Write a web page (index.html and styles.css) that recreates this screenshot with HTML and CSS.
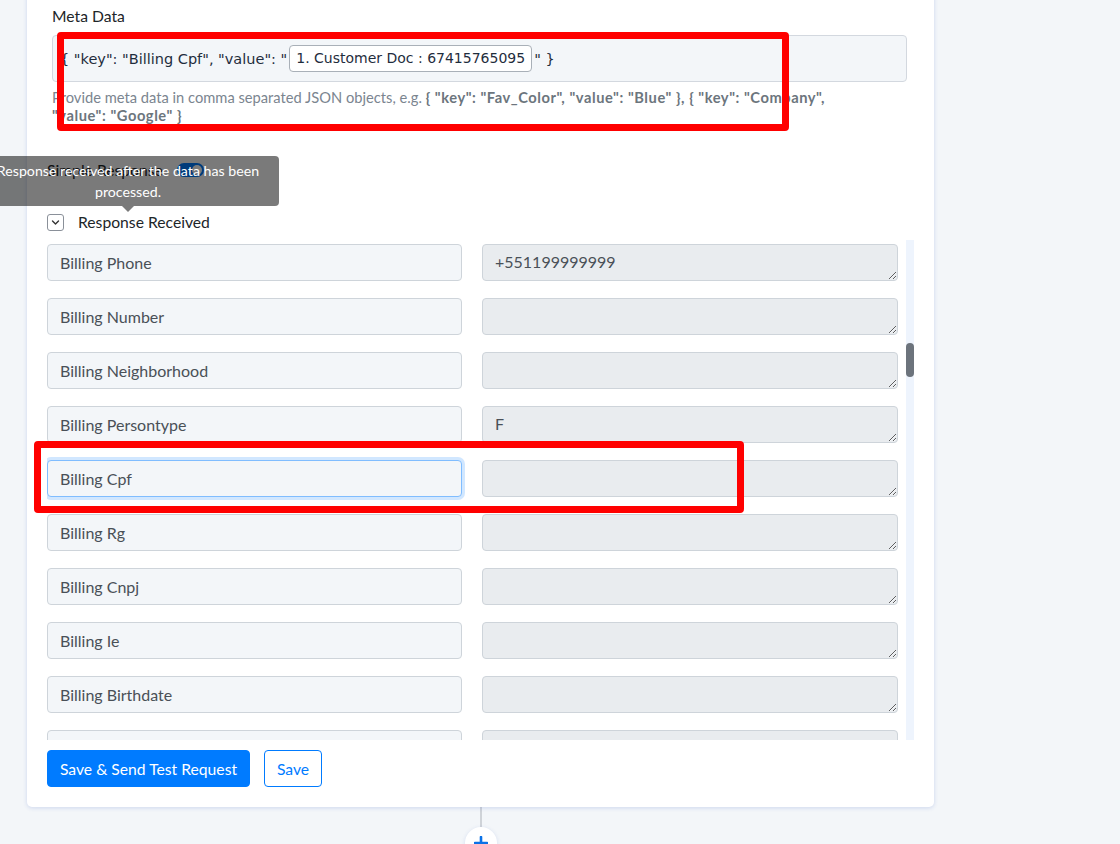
FILE: index.html
```html
<!DOCTYPE html>
<html lang="en">
<head>
<meta charset="utf-8">
<title>Webhook Step</title>
<link rel="stylesheet" href="styles.css">
</head>
<body>
<div class="page">
  <div class="card">
    <section class="meta">
      <div class="meta-label">Meta Data</div>
      <div class="meta-box">
        <span class="meta-text">{ "key": "Billing Cpf", "value": "</span><span class="token">1. Customer Doc : 67415765095</span><span class="meta-text">" }</span>
      </div>
      <p class="help">Provide meta data in comma separated JSON objects, e.g. <b>{ "key": "Fav_Color", "value": "Blue" }, { "key": "Company", "value": "Google" }</b></p>
      <div class="mark mark-meta"></div>
    </section>

    <div class="simple">
      <span class="simple-label">Simple Response</span>
      <span class="toggle"><span class="knob"></span></span>
      <div class="tooltip">Response received after the data has been<br>processed.</div>
    </div>

    <div class="received">
      <span class="chev">
        <svg width="11" height="11" viewBox="0 0 11 11"><path d="M2.5 4l3 3 3-3" fill="none" stroke="#333" stroke-width="1.4" stroke-linecap="round" stroke-linejoin="round"/></svg>
      </span>
      <span>Response Received</span>
    </div>

    <div class="scroller">
      <div class="rows">
        <div class="row"><input class="key" value="Billing Phone" readonly><textarea class="val" readonly>+551199999999</textarea></div>
        <div class="row"><input class="key" value="Billing Number" readonly><textarea class="val" readonly></textarea></div>
        <div class="row"><input class="key" value="Billing Neighborhood" readonly><textarea class="val" readonly></textarea></div>
        <div class="row"><input class="key" value="Billing Persontype" readonly><textarea class="val" readonly>F</textarea></div>
        <div class="row"><input class="key focus" value="Billing Cpf" readonly><textarea class="val" readonly></textarea></div>
        <div class="row"><input class="key" value="Billing Rg" readonly><textarea class="val" readonly></textarea></div>
        <div class="row"><input class="key" value="Billing Cnpj" readonly><textarea class="val" readonly></textarea></div>
        <div class="row"><input class="key" value="Billing Ie" readonly><textarea class="val" readonly></textarea></div>
        <div class="row"><input class="key" value="Billing Birthdate" readonly><textarea class="val" readonly></textarea></div>
        <div class="row"><input class="key" value="Billing Gender" readonly><textarea class="val" readonly></textarea></div>
      </div>
      <div class="track"><div class="thumb"></div></div>
    </div>

    <div class="actions">
      <button class="btn btn-primary">Save &amp; Send Test Request</button>
      <button class="btn btn-outline">Save</button>
    </div>

    <div class="mark mark-row"></div>
  </div>

  <div class="connector">
    <span class="line"></span>
    <span class="add">
      <svg width="14" height="14" viewBox="0 0 14 14"><path d="M7 1v12M1 7h12" stroke="#0b72e7" stroke-width="2.6" stroke-linecap="round"/></svg>
    </span>
  </div>
</div>
</body>
</html>
```

FILE: styles.css
```css
html, body {
  margin: 0;
  padding: 0;
}

body {
  background: #f3f6f9;
  font-family: Lato, "Open Sans", sans-serif;
  color: #212529;
  overflow: hidden;
  height: 844px;
}

.page {
  width: 907px;
  margin-left: 27px;
}

.card {
  position: relative;
  background: #fff;
  border-radius: 0 0 5px 5px;
  box-shadow: 0 1px 4px rgba(40, 80, 190, 0.18);
  margin-top: -10px;
  padding: 16px 20px 20px;
}

/* meta data block */
.meta {
  position: relative;
  margin: 0 7px 0 5px;
}

.meta-label {
  font-size: 15.7px;
  line-height: 20px;
  margin-bottom: 9px;
}

.meta-box {
  height: 45px;
  border: 1px solid #d3d8df;
  border-radius: 4px;
  background: #f3f6f9;
  display: flex;
  align-items: center;
  padding-left: 7px;
  font-family: "DejaVu Sans", sans-serif;
  font-size: 14px;
  color: #1f2d3d;
  white-space: pre;
}

.meta-text {
  font-size: 14.5px;
}

.token {
  background: #fff;
  border: 1px solid #a9b0b8;
  border-radius: 4px;
  padding: 4px 6px 4px;
  margin: 0 2px;
  line-height: 17px;
}

.help {
  margin: 6px 0 0;
  padding-right: 70px;
  font-size: 14.7px;
  line-height: 18px;
  color: #7b8590;
}

.help b {
  color: #6c757d;
  font-weight: 700;
  letter-spacing: 0.55px;
}

/* red call-out frames */
.mark {
  position: absolute;
  border: 7px solid #ff0000;
  border-radius: 4px;
  pointer-events: none;
}

.mark-meta {
  left: 5px;
  top: 26px;
  width: 718px;
  height: 85px;
}

.mark-row {
  left: 7px;
  top: 451px;
  width: 696px;
  height: 58px;
}

/* simple response */
.simple {
  position: relative;
  margin-top: 36px;
  display: flex;
  align-items: center;
  height: 20px;
  font-size: 15.7px;
}

.toggle {
  margin-left: 14px;
  width: 27px;
  height: 14px;
  border-radius: 8px;
  background: #007bff;
  display: flex;
  align-items: center;
  justify-content: flex-end;
  padding: 0 2px;
  box-sizing: border-box;
}

.knob {
  width: 10px;
  height: 10px;
  border-radius: 50%;
  background: #fff;
}

.tooltip {
  position: absolute;
  left: -70px;
  top: -4px;
  width: 302px;
  box-sizing: border-box;
  padding: 4px 0;
  background: rgba(0, 0, 0, 0.52);
  color: #fff;
  font-size: 14.2px;
  line-height: 21px;
  text-align: center;
  border-radius: 4px;
  white-space: nowrap;
}

.tooltip::after {
  content: "";
  position: absolute;
  left: 145px;
  bottom: -6px;
  border-left: 6px solid transparent;
  border-right: 6px solid transparent;
  border-top: 6px solid rgba(0, 0, 0, 0.52);
}

/* response received */
.received {
  margin-top: 32px;
  display: flex;
  align-items: center;
  gap: 14px;
  height: 20px;
  font-size: 15.7px;
}

.chev {
  width: 15px;
  height: 15px;
  border: 1px solid #8a9099;
  border-radius: 3px;
  display: flex;
  align-items: center;
  justify-content: center;
}

/* response list */
.scroller {
  margin-top: 8px;
  height: 500px;
  display: flex;
  gap: 8px;
  overflow: hidden;
}

.rows {
  flex: 1;
  display: flex;
  flex-direction: column;
  gap: 17px;
  padding-top: 4px;
}

.row {
  display: grid;
  grid-template-columns: 415px 416px;
  gap: 20px;
  flex: none;
}

.key, .val {
  box-sizing: border-box;
  height: 37px;
  margin: 0;
  border-radius: 4px;
  font-family: Lato, "Open Sans", sans-serif;
  font-size: 16px;
  color: #495057;
  outline: none;
}

.key {
  border: 1px solid #ced4da;
  background: #f3f6f9;
  padding: 0 12px;
}

.key.focus {
  border-color: #80bdff;
  box-shadow: 0 0 0 3px rgba(0, 123, 255, 0.18);
}

.val {
  border: 1px solid #ced4da;
  background: #e9ecef;
  padding: 7px 12px;
  resize: vertical;
  line-height: 20px;
  overflow: hidden;
}

.track {
  width: 8px;
  flex: none;
  background: #eef4fd;
}

.thumb {
  margin-top: 103px;
  height: 34px;
  border-radius: 4px;
  background: #6c737c;
}

/* buttons */
.actions {
  margin-top: 10px;
  display: flex;
  gap: 14px;
}

.btn {
  height: 37px;
  border-radius: 4px;
  font-family: Lato, "Open Sans", sans-serif;
  font-size: 15.7px;
  padding: 0 10px;
  cursor: pointer;
}

.btn-primary {
  width: 203px;
  background: #007bff;
  color: #fff;
  border: 1px solid #007bff;
}

.btn-outline {
  width: 58px;
  background: #fff;
  color: #007bff;
  border: 1px solid #007bff;
}

/* connector to next step */
.connector {
  display: flex;
  flex-direction: column;
  align-items: center;
}

.line {
  width: 2px;
  height: 20px;
  background: #cfd3d8;
}

.add {
  width: 32px;
  height: 32px;
  border-radius: 50%;
  background: #fff;
  box-shadow: 0 1px 4px rgba(40, 80, 190, 0.15);
  display: flex;
  align-items: center;
  justify-content: center;
}
```
